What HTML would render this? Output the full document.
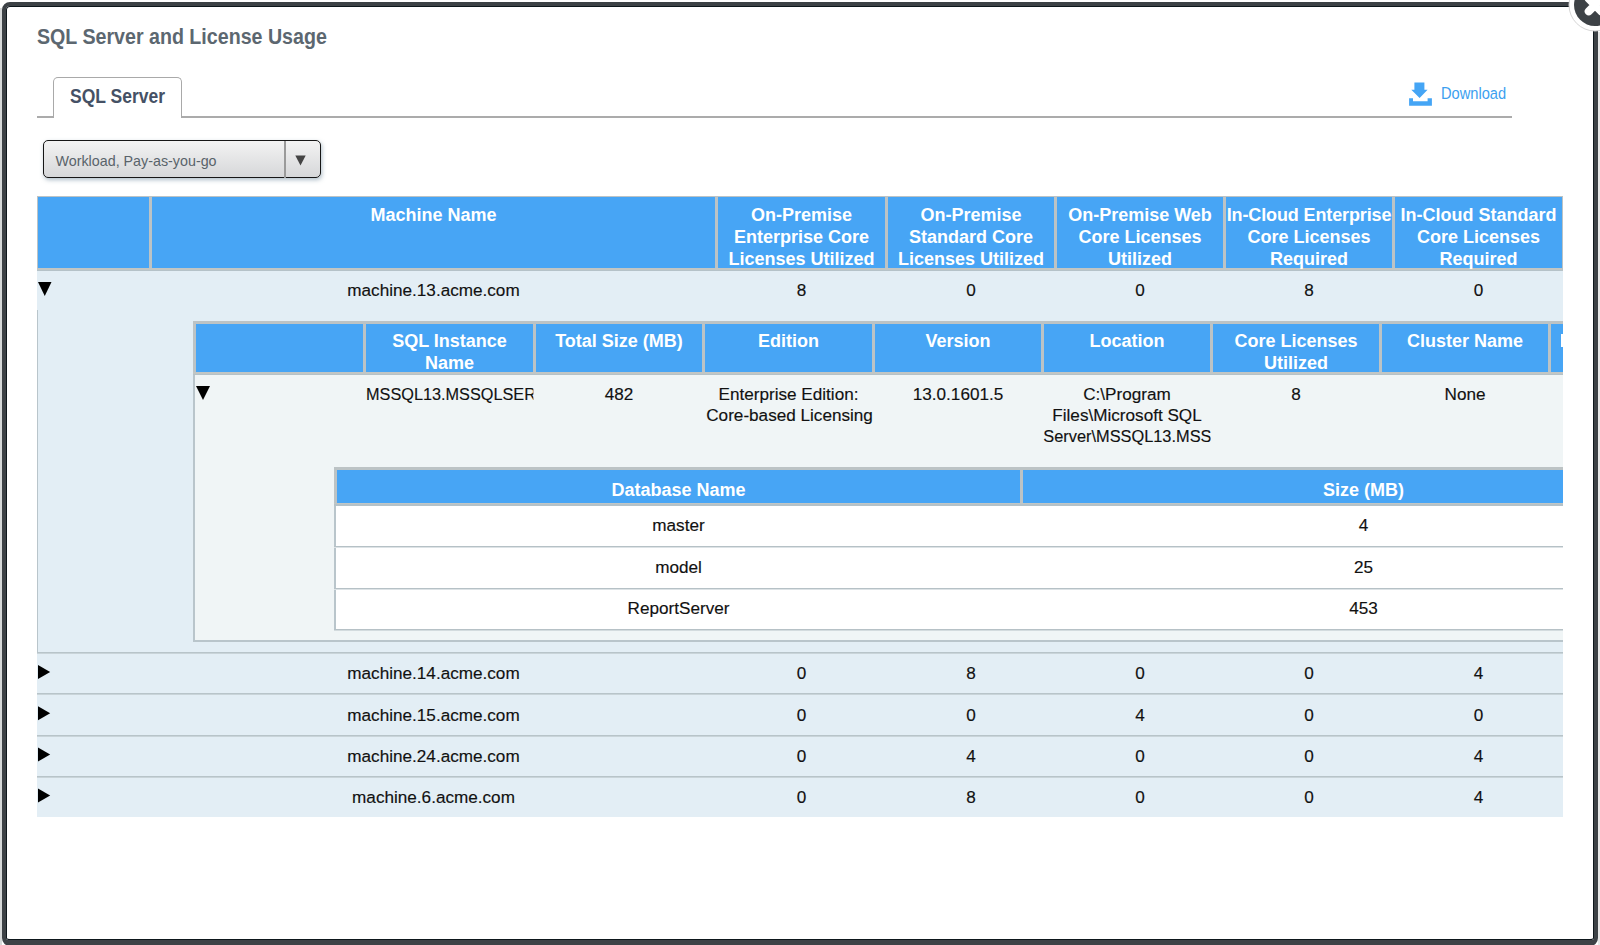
<!DOCTYPE html>
<html><head><meta charset="utf-8">
<style>
html,body{margin:0;padding:0;}
body{width:1600px;height:945px;position:relative;overflow:hidden;background:#fff;font-family:"Liberation Sans",sans-serif;}
.a{position:absolute;}
#modal{left:2px;top:2px;width:1588px;height:934px;border:4px solid #3d4246;border-bottom-width:6px;border-radius:8px;background:#fff;box-shadow:inset 0 0 0 1px #0e171c;}
.title{left:37px;top:25.2px;font-size:21.6px;line-height:24px;font-weight:bold;color:#5c6770;white-space:nowrap;transform:scaleX(0.909);transform-origin:0 0;}
.tabline{left:37px;top:116px;width:1475px;height:2px;background:#ababab;}
.tab{left:53px;top:77px;width:127px;height:40px;border:1.5px solid #a9a9a9;border-bottom:none;border-radius:5px 5px 0 0;background:#fff;}
.tabtxt{left:70px;top:85.4px;font-size:19.5px;line-height:22px;font-weight:bold;color:#455165;white-space:nowrap;transform:scaleX(0.897);transform-origin:0 0;}
.dl{left:1441px;top:83.9px;font-size:16.3px;line-height:18px;color:#3d9ff0;white-space:nowrap;transform:scaleX(0.9);transform-origin:0 0;}
.dd{left:43px;top:140px;width:276px;height:36px;border:1.5px solid #161616;border-radius:5px;background:linear-gradient(#f3f3f3,#d6d7d9);box-shadow:1px 2px 4px rgba(100,130,150,0.5);}
.ddsep{left:284px;top:141px;width:2px;height:37px;background:#9a9a9a;}
.ddtxt{left:55.5px;top:152px;font-size:14.3px;line-height:18px;color:#59636a;white-space:nowrap;}
.hdr{background:#47a5f5;}
.bd{background:#bfc5c6;}
.ht{color:#fff;font-weight:bold;font-size:18px;line-height:22px;text-align:center;white-space:nowrap;}
.t{color:#111;font-size:17.4px;line-height:21px;text-align:center;white-space:nowrap;transform:scaleX(0.985);-webkit-text-stroke:0.15px #111;}
.rowbg{background:#e3eef5;}
.sep{background:#b9c5cb;}
</style></head><body>
<div class="a" style="left:0;top:8px;width:2px;height:937px;background:#d6d9d9"></div>
<div class="a" style="left:1598px;top:32px;width:2px;height:913px;background:#e6e7e7"></div>
<div id="modal" class="a"></div>
<!-- close button -->
<svg class="a" style="left:1560px;top:0;" width="40" height="40" viewBox="1560 0 40 40">
<circle cx="1595" cy="5" r="26" fill="#fff" stroke="#d6d6d6" stroke-width="1"/>
<circle cx="1595" cy="5" r="21" fill="#3d4246"/>
<path d="M1588.7 11.3 L1601.3 -1.3 M1588.7 -1.3 L1601.3 11.3" stroke="#fff" stroke-width="8" stroke-linecap="round"/>
</svg>
<div class="a title">SQL Server and License Usage</div>
<div class="a tabline"></div>
<div class="a tab"></div>
<div class="a tabtxt">SQL Server</div>
<svg class="a" style="left:1400px;top:75px" width="40" height="40" viewBox="0 0 40 40">
<path fill="#45a5f5" d="M14.4 7.4H24.4V14.8H27.6L19.6 23L11.3 14.8H14.4Z M9.1 23.3H13V26.3H27.6V23.3H31.9V30.7H9.1Z"/>
</svg>
<div class="a dl">Download</div>
<div class="a dd"></div>
<div class="a ddsep"></div>
<div class="a ddtxt">Workload, Pay-as-you-go</div>
<svg class="a" style="left:290px;top:150px" width="20" height="20" viewBox="0 0 20 20"><path d="M5.3 5.4H15.7L10.5 15.6Z" fill="#444"/></svg>

<!-- MAIN TABLE -->
<div class="a" style="left:0;top:0;width:1563px;height:945px;overflow:hidden">
<div class="a" style="left:37px;top:196px;width:1526px;height:75px;background:#bcc3c5;"></div>
<div class="a" style="left:38px;top:197px;width:1524px;height:71px;background:#47a5f5;"></div>
<div class="a" style="left:37px;top:268px;width:1526px;height:3px;background:linear-gradient(#c2c6c4 0,#c2c6c4 1.5px,#b5c2c8 1.5px);"></div>
<div class="a" style="left:149px;top:197px;width:3px;height:71px;background:#bcc3c5;"></div>
<div class="a" style="left:715px;top:197px;width:3px;height:71px;background:#bcc3c5;"></div>
<div class="a" style="left:885px;top:197px;width:3px;height:71px;background:#bcc3c5;"></div>
<div class="a" style="left:1054px;top:197px;width:3px;height:71px;background:#bcc3c5;"></div>
<div class="a" style="left:1223px;top:197px;width:3px;height:71px;background:#bcc3c5;"></div>
<div class="a" style="left:1392px;top:197px;width:3px;height:71px;background:#bcc3c5;"></div>
<div class="a" style="left:1562px;top:196px;width:1px;height:75px;background:#bcc3c5;"></div>
<div class="a ht" style="left:152px;top:204.1px;width:563px;">Machine Name</div>
<div class="a ht" style="left:718px;top:204.1px;width:167px;">On-Premise<br>Enterprise Core<br>Licenses Utilized</div>
<div class="a ht" style="left:888px;top:204.1px;width:166px;">On-Premise<br>Standard Core<br>Licenses Utilized</div>
<div class="a ht" style="left:1057px;top:204.1px;width:166px;">On-Premise Web<br>Core Licenses<br>Utilized</div>
<div class="a ht" style="left:1226px;top:204.1px;width:166px;"><span style="letter-spacing:-0.12px">In-Cloud Enterprise</span><br>Core Licenses<br>Required</div>
<div class="a ht" style="left:1395px;top:204.1px;width:167px;">In-Cloud Standard<br>Core Licenses<br>Required</div>
<div class="a" style="left:37px;top:271px;width:1526px;height:546px;background:#e3eef5;"></div>
<div class="a" style="left:37px;top:310px;width:1px;height:342px;background:#b9c5cb;"></div>
<div class="a" style="left:37px;top:652px;width:1526px;height:2px;background:linear-gradient(#b8c4c9 0,#b8c4c9 1px,#c9d4d9 1px);"></div>
<div class="a" style="left:37px;top:693px;width:1526px;height:2px;background:linear-gradient(#b8c4c9 0,#b8c4c9 1px,#c9d4d9 1px);"></div>
<div class="a" style="left:37px;top:735px;width:1526px;height:2px;background:linear-gradient(#b8c4c9 0,#b8c4c9 1px,#c9d4d9 1px);"></div>
<div class="a" style="left:37px;top:776px;width:1526px;height:2px;background:linear-gradient(#b8c4c9 0,#b8c4c9 1px,#c9d4d9 1px);"></div>
<div class="a t" style="left:152px;top:280.2px;width:563px;">machine.13.acme.com</div>
<div class="a t" style="left:718px;top:280.2px;width:167px;">8</div>
<div class="a t" style="left:888px;top:280.2px;width:166px;">0</div>
<div class="a t" style="left:1057px;top:280.2px;width:166px;">0</div>
<div class="a t" style="left:1226px;top:280.2px;width:166px;">8</div>
<div class="a t" style="left:1395px;top:280.2px;width:167px;">0</div>
<div class="a t" style="left:152px;top:663.2px;width:563px;">machine.14.acme.com</div>
<div class="a t" style="left:718px;top:663.2px;width:167px;">0</div>
<div class="a t" style="left:888px;top:663.2px;width:166px;">8</div>
<div class="a t" style="left:1057px;top:663.2px;width:166px;">0</div>
<div class="a t" style="left:1226px;top:663.2px;width:166px;">0</div>
<div class="a t" style="left:1395px;top:663.2px;width:167px;">4</div>
<div class="a t" style="left:152px;top:704.6px;width:563px;">machine.15.acme.com</div>
<div class="a t" style="left:718px;top:704.6px;width:167px;">0</div>
<div class="a t" style="left:888px;top:704.6px;width:166px;">0</div>
<div class="a t" style="left:1057px;top:704.6px;width:166px;">4</div>
<div class="a t" style="left:1226px;top:704.6px;width:166px;">0</div>
<div class="a t" style="left:1395px;top:704.6px;width:167px;">0</div>
<div class="a t" style="left:152px;top:745.8px;width:563px;">machine.24.acme.com</div>
<div class="a t" style="left:718px;top:745.8px;width:167px;">0</div>
<div class="a t" style="left:888px;top:745.8px;width:166px;">4</div>
<div class="a t" style="left:1057px;top:745.8px;width:166px;">0</div>
<div class="a t" style="left:1226px;top:745.8px;width:166px;">0</div>
<div class="a t" style="left:1395px;top:745.8px;width:167px;">4</div>
<div class="a t" style="left:152px;top:787.0px;width:563px;">machine.6.acme.com</div>
<div class="a t" style="left:718px;top:787.0px;width:167px;">0</div>
<div class="a t" style="left:888px;top:787.0px;width:166px;">8</div>
<div class="a t" style="left:1057px;top:787.0px;width:166px;">0</div>
<div class="a t" style="left:1226px;top:787.0px;width:166px;">0</div>
<div class="a t" style="left:1395px;top:787.0px;width:167px;">4</div>
<div class="a" style="left:193px;top:321px;width:1370px;height:321px;background:#f0f5f6;"></div>
<div class="a" style="left:193px;top:321px;width:2px;height:320px;background:#b9c5cb;"></div>
<div class="a" style="left:193px;top:640px;width:1370px;height:2px;background:#b9c5cb;"></div>
<div class="a" style="left:193px;top:321px;width:1370px;height:54px;background:#bcc3c5;"></div>
<div class="a" style="left:196px;top:324px;width:1367px;height:48px;background:#47a5f5;"></div>
<div class="a" style="left:193px;top:372px;width:1370px;height:3px;background:linear-gradient(#c2c6c4 0,#c2c6c4 1.5px,#b5c2c8 1.5px);"></div>
<div class="a" style="left:363px;top:324px;width:3px;height:48px;background:#bcc3c5;"></div>
<div class="a" style="left:533px;top:324px;width:3px;height:48px;background:#bcc3c5;"></div>
<div class="a" style="left:702px;top:324px;width:3px;height:48px;background:#bcc3c5;"></div>
<div class="a" style="left:872px;top:324px;width:3px;height:48px;background:#bcc3c5;"></div>
<div class="a" style="left:1041px;top:324px;width:3px;height:48px;background:#bcc3c5;"></div>
<div class="a" style="left:1210px;top:324px;width:3px;height:48px;background:#bcc3c5;"></div>
<div class="a" style="left:1379px;top:324px;width:3px;height:48px;background:#bcc3c5;"></div>
<div class="a" style="left:1548px;top:324px;width:3px;height:48px;background:#bcc3c5;"></div>
<div class="a" style="left:1561px;top:334px;width:1.5px;height:13px;background:#fff;"></div>
<div class="a ht" style="left:366px;top:330.1px;width:167px;">SQL Instance<br>Name</div>
<div class="a ht" style="left:536px;top:330.1px;width:166px;">Total Size (MB)</div>
<div class="a ht" style="left:705px;top:330.1px;width:167px;">Edition</div>
<div class="a ht" style="left:875px;top:330.1px;width:166px;">Version</div>
<div class="a ht" style="left:1042px;top:330.1px;width:170px;">Location</div>
<div class="a ht" style="left:1213px;top:330.1px;width:166px;">Core Licenses<br>Utilized</div>
<div class="a ht" style="left:1382px;top:330.1px;width:166px;">Cluster Name</div>
<div class="a t" style="left:366px;top:384.40000000000003px;width:179px;text-align:left;overflow:hidden;transform-origin:0 0;transform:scaleX(0.935);">MSSQL13.MSSQLSERVER</div>
<div class="a t" style="left:536px;top:384.40000000000003px;width:166px;">482</div>
<div class="a t" style="left:705px;top:384.40000000000003px;width:167px;">Enterprise Edition:<br>Core-based Licensing</div>
<div class="a t" style="left:875px;top:384.40000000000003px;width:166px;">13.0.1601.5</div>
<div class="a t" style="left:1042px;top:384.40000000000003px;width:170px;overflow:hidden;">C:\Program<br>Files\Microsoft SQL<br><span style="display:block;text-align:left;transform:scaleX(0.955);transform-origin:0 0;width:200px">Server\MSSQL13.MSSQLSERVER</span></div>
<div class="a t" style="left:1213px;top:384.40000000000003px;width:166px;">8</div>
<div class="a t" style="left:1382px;top:384.40000000000003px;width:166px;">None</div>
<div class="a" style="left:334px;top:467px;width:1229px;height:39px;background:#bcc3c5;"></div>
<div class="a" style="left:337px;top:470px;width:1226px;height:33px;background:#47a5f5;"></div>
<div class="a" style="left:334px;top:503px;width:1229px;height:3px;background:linear-gradient(#c2c6c4 0,#c2c6c4 1.5px,#b5c2c8 1.5px);"></div>
<div class="a" style="left:1020px;top:470px;width:3px;height:33px;background:#bcc3c5;"></div>
<div class="a ht" style="left:337px;top:479.36px;width:683px;">Database Name</div>
<div class="a ht" style="left:1023px;top:479.36px;width:681px;">Size (MB)</div>
<div class="a" style="left:334px;top:506px;width:2px;height:124px;background:#b9c5cb;"></div>
<div class="a" style="left:336px;top:506px;width:1227px;height:123px;background:#fff;"></div>
<div class="a" style="left:334px;top:546px;width:1229px;height:2px;background:linear-gradient(#b6c1c6 0,#b6c1c6 1px,#dde3e6 1px);"></div>
<div class="a" style="left:334px;top:588px;width:1229px;height:2px;background:linear-gradient(#b6c1c6 0,#b6c1c6 1px,#dde3e6 1px);"></div>
<div class="a" style="left:334px;top:629px;width:1229px;height:2px;background:linear-gradient(#b6c1c6 0,#b6c1c6 1px,#d3dbde 1px);"></div>
<div class="a t" style="left:337px;top:515.4px;width:683px;">master</div>
<div class="a t" style="left:1023px;top:515.4px;width:681px;">4</div>
<div class="a t" style="left:337px;top:556.6px;width:683px;">model</div>
<div class="a t" style="left:1023px;top:556.6px;width:681px;">25</div>
<div class="a t" style="left:337px;top:597.5px;width:683px;">ReportServer</div>
<div class="a t" style="left:1023px;top:597.5px;width:681px;">453</div>
<svg class="a" style="left:0;top:0" width="1600" height="945">
<path d="M38 282H51.5L44.75 296Z" fill="#000"/>
<path d="M38 665.0L50.2 672.0L38 679.0Z" fill="#000"/>
<path d="M38 706.2L50.2 713.2L38 720.2Z" fill="#000"/>
<path d="M38 747.4L50.2 754.4L38 761.4Z" fill="#000"/>
<path d="M38 788.6L50.2 795.6L38 802.6Z" fill="#000"/>
<path d="M196 386H210L203 400Z" fill="#000"/>
</svg>
</div>
</body></html>
